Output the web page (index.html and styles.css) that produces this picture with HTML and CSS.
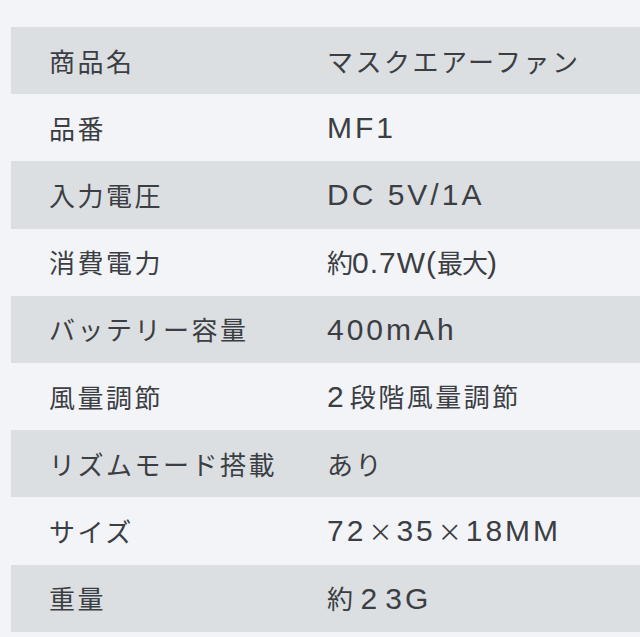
FILE: index.html
```html
<!DOCTYPE html>
<html lang="ja">
<head>
<meta charset="utf-8">
<link rel="stylesheet" href="styles.css">
</head>
<body>
<div class="spec">
  <div class="row alt"><div class="label">商品名</div><div class="value">マスクエアーファン</div></div>
  <div class="row"><div class="label">品番</div><div class="value"><span class="en">MF1</span></div></div>
  <div class="row alt"><div class="label">入力電圧</div><div class="value"><span class="en">DC 5V/1A</span></div></div>
  <div class="row"><div class="label">消費電力</div><div class="value tight">約<span class="en">0.7W(</span>最大<span class="en">)</span></div></div>
  <div class="row alt"><div class="label">バッテリー容量</div><div class="value"><span class="en">400mAh</span></div></div>
  <div class="row"><div class="label">風量調節</div><div class="value"><span class="en lead">2</span>段階風量調節</div></div>
  <div class="row alt"><div class="label">リズムモード搭載</div><div class="value">あり</div></div>
  <div class="row"><div class="label">サイズ</div><div class="value"><span class="en">72<span class="times">×</span>35<span class="times">×</span>18MM</span></div></div>
  <div class="row alt"><div class="label">重量</div><div class="value">約<span class="en fw">2</span><span class="en fw">3</span><span class="en">G</span></div></div>
</div>
</body>
</html>
```
FILE: styles.css
```css
html, body {
  margin: 0;
  padding: 0;
  background: #f3f4f8;
}
body {
  font-family: "Noto Sans CJK JP", "Noto Sans", sans-serif;
  color: #3b3e43;
  width: 640px;
  height: 637px;
  overflow: hidden;
}
.spec {
  padding-top: 27px;
  padding-left: 11px;
  display: flex;
  flex-direction: column;
}
.row {
  display: flex;
  align-items: center;
  height: 67.2px;
  font-size: 26px;
  letter-spacing: 2.5px;
  line-height: 26px;
}
.row.alt {
  background: #dcdfe2;
}
.label {
  width: 278px;
  padding-left: 38px;
  box-sizing: border-box;
  white-space: nowrap;
}
.value {
  padding-left: 38px;
  white-space: nowrap;
}
.en {
  font-family: "Liberation Sans", Arial, sans-serif;
  font-size: 30px;
  letter-spacing: 3px;
}
.tight {
  letter-spacing: -1px;
}
.tight .en {
  letter-spacing: 1px;
}
.times {
  font-family: "Noto Sans CJK JP", sans-serif;
  font-size: 24px;
  letter-spacing: 0;
  margin: 0 4px 0 2px;
}
.lead {
  margin-right: 3px;
}
.fw {
  margin-left: 5px;
}
```
